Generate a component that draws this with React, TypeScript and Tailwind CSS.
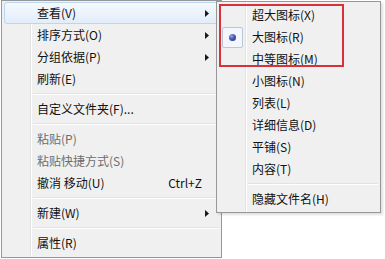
type MenuEntry =
  | { kind: 'sep' }
  | {
      kind?: 'item';
      label: string;
      sub?: boolean;
      shortcut?: string;
      disabled?: boolean;
      active?: boolean;
      checked?: boolean;
    };

const MAIN_MENU: MenuEntry[] = [
  { label: '查看(V)', sub: true, active: true },
  { label: '排序方式(O)', sub: true },
  { label: '分组依据(P)', sub: true },
  { label: '刷新(E)' },
  { kind: 'sep' },
  { label: '自定义文件夹(F)...' },
  { kind: 'sep' },
  { label: '粘贴(P)', disabled: true },
  { label: '粘贴快捷方式(S)', disabled: true },
  { label: '撤消 移动(U)', shortcut: 'Ctrl+Z' },
  { kind: 'sep' },
  { label: '新建(W)', sub: true },
  { kind: 'sep' },
  { label: '属性(R)' },
];

const VIEW_MENU: MenuEntry[] = [
  { label: '超大图标(X)' },
  { label: '大图标(R)', checked: true },
  { label: '中等图标(M)' },
  { label: '小图标(N)' },
  { label: '列表(L)' },
  { label: '详细信息(D)' },
  { label: '平铺(S)' },
  { label: '内容(T)' },
  { kind: 'sep' },
  { label: '隐藏文件名(H)' },
];

// gutter line drawn into the menu background (28px from padding edge)
const MENU_BG =
  'bg-[linear-gradient(to_right,#f0f0f0_28px,#e2e3e3_28px,#e2e3e3_29px,#ffffff_29px,#ffffff_30px,#f0f0f0_30px)]';

function SubArrow() {
  return (
    <svg width="4" height="7" viewBox="0 0 4 7" className="ml-auto mr-[9px]">
      <path d="M0 0 L4 3.5 L0 7 Z" fill="#1a1a1a" />
    </svg>
  );
}

function RadioMark() {
  return (
    <div className="absolute left-[2px] top-0 w-[21px] h-[21px] rounded-[2px] border border-[#b9c7d8] bg-[#f3f6fa] flex items-center justify-center">
      <div className="w-[7px] h-[7px] rounded-full bg-[radial-gradient(circle_at_35%_30%,#9aa6e6_0%,#4756b0_45%,#283280_100%)]" />
    </div>
  );
}

function MenuList({ entries }: { entries: MenuEntry[] }) {
  return (
    <>
      {entries.map((entry, i) => {
        if (entry.kind === 'sep') {
          return (
            <div key={i} className="h-[8px] flex flex-col justify-center pl-[29px]">
              <div className="h-px bg-[#e2e3e3]" />
              <div className="h-px bg-white" />
            </div>
          );
        }
        return (
          <div
            key={i}
            className={`relative h-[22px] flex items-center pl-[32px] rounded-[3px] border ${
              entry.active
                ? 'border-[#bcd5f1] bg-[linear-gradient(to_bottom,#f5f9fe,#e2edfa)]'
                : 'border-transparent'
            } ${entry.disabled ? 'text-[#6d6d6d]' : 'text-[#111111]'}`}
          >
            {entry.checked && <RadioMark />}
            <span className="leading-[22px] whitespace-nowrap">{entry.label}</span>
            {entry.shortcut && (
              <span className="ml-auto mr-[16px] leading-[22px]">{entry.shortcut}</span>
            )}
            {entry.sub && <SubArrow />}
          </div>
        );
      })}
    </>
  );
}

export default function App() {
  return (
    <div
      className="relative w-[385px] h-[259px] bg-white overflow-hidden text-[12px]"
      style={{ fontFamily: '"Noto Sans CJK SC", "Microsoft YaHei", sans-serif' }}
    >
      <div className={`ml-px w-[221px] h-[258px] border border-[#979797] p-[2px] pt-[1px] ${MENU_BG}`}>
        <MenuList entries={MAIN_MENU} />
      </div>

      <div
        className={`absolute left-[216px] top-px w-[165px] h-[212px] border border-[#979797] p-[2px] shadow-[2px_2px_2px_rgba(0,0,0,0.12)] ${MENU_BG}`}
      >
        <MenuList entries={VIEW_MENU} />
      </div>

      {/* red annotation box */}
      <div className="absolute left-[219px] top-[4px] w-[125px] h-[63px] border-2 border-[#d6323c]" />
    </div>
  );
}
